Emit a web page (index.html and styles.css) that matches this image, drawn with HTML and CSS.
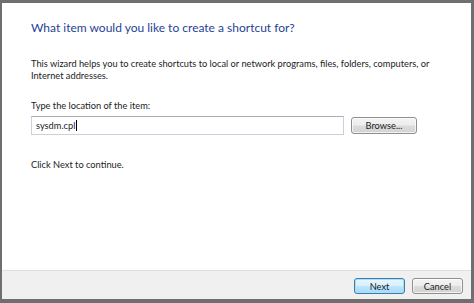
FILE: index.html
```html
<!DOCTYPE html>
<html>
<head>
  <title>Create Shortcut</title>
  <link rel="stylesheet" href="styles.css">
</head>
<body>

<div class="dialog">
  <div class="content">
    <h1 class="instruction">What item would you like to create a shortcut for?</h1>

    <p class="intro">This wizard helps you to create shortcuts to local or network programs, files, folders, computers, or Internet addresses.</p>

    <label class="field-label" for="location">Type the location of the item:</label>
    <div class="field-row">
      <div class="textbox" id="location">sysdm.cpl<span class="caret"></span></div>
      <button class="btn browse">Browse...</button>
    </div>

    <p class="hint">Click Next to continue.</p>
  </div>

  <div class="footer">
    <button class="btn default">Next</button>
    <button class="btn">Cancel</button>
  </div>
</div>

</body>
</html>
```

FILE: styles.css
```css
body {
  margin: 0;
  background: #6f6f6f;
  font-family: Lato, "Liberation Sans", sans-serif;
  font-size: 9.25px;
  color: #1c1c1c;
}

.dialog {
  margin: 3px 3px 4px 2px;
  height: 296px;
  background: #fff;
  display: flex;
  flex-direction: column;
}

.content {
  flex: 1;
  padding: 16px 0 0 29px;
}

.instruction {
  margin: 0;
  font-size: 12px;
  font-weight: normal;
  line-height: 18px;
  color: #1f3f95;
}

.intro {
  margin: 21px 0 0 0;
  width: 415px;
  line-height: 12px;
}

.field-label {
  display: block;
  margin-top: 18px;
  line-height: 12px;
}

.field-row {
  display: flex;
  align-items: center;
  margin-top: 4px;
}

.textbox {
  width: 307px;
  height: 17px;
  line-height: 17px;
  padding-left: 4px;
  border: 1px solid #c9d1dc;
  border-top-color: #abadb3;
}

.caret {
  display: inline-block;
  width: 1px;
  height: 11px;
  margin-left: 1px;
  vertical-align: -2px;
  background: #000;
}

.btn {
  font-family: inherit;
  font-size: 9.25px;
  color: #1c1c1c;
  width: 51px;
  height: 16px;
  padding: 0;
  border: 1px solid #8e8f8f;
  border-radius: 3px;
  background: linear-gradient(#f4f4f4 0%, #ececec 48%, #dcdcdc 52%, #d2d2d2 100%);
  box-shadow: inset 0 0 0 1px rgba(255, 255, 255, 0.7);
}

.browse {
  width: 66px;
  height: 17px;
  margin-left: 7px;
}

.hint {
  margin: 24px 0 0 0;
  line-height: 12px;
}

.footer {
  height: 29px;
  background: #f0f0f0;
  border-top: 1px solid #dfdfdf;
  display: flex;
  justify-content: flex-end;
  align-items: flex-start;
  gap: 7px;
  padding: 7px 8px 0 0;
  box-sizing: border-box;
}

.default {
  border-color: #3d7bad;
  background: linear-gradient(#eaf6fd 0%, #d9f0fc 48%, #bee6fd 52%, #a7d9f5 100%);
  box-shadow: inset 0 0 0 1px #a8e1f7;
}
```
